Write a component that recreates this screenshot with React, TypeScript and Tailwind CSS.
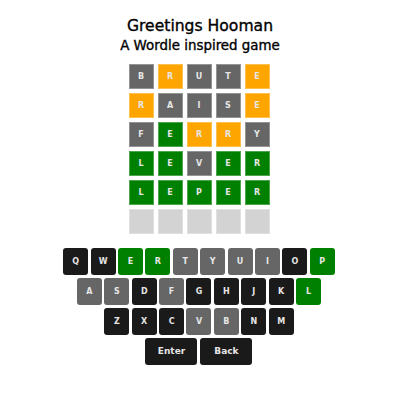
const GREEN = "bg-[#008000]";
const ORANGE = "bg-[#ffa500]";
const GRAY = "bg-[#666666]";
const DARK = "bg-[#1a1a1a]";

type Tile = { l: string; c: string };

const g = (l: string): Tile => ({ l, c: GRAY });
const o = (l: string): Tile => ({ l, c: ORANGE });
const v = (l: string): Tile => ({ l, c: GREEN });

const board: Tile[][] = [
  [g("B"), o("R"), g("U"), g("T"), o("E")],
  [o("R"), g("A"), g("I"), g("S"), o("E")],
  [g("F"), v("E"), o("R"), o("R"), g("Y")],
  [v("L"), v("E"), g("V"), v("E"), v("R")],
  [v("L"), v("E"), v("P"), v("E"), v("R")],
];

const keyColors: Record<string, string> = {
  Q: DARK, W: DARK, E: GREEN, R: GREEN, T: GRAY, Y: GRAY, U: GRAY, I: GRAY, O: DARK, P: GREEN,
  A: GRAY, S: GRAY, D: DARK, F: GRAY, G: DARK, H: DARK, J: DARK, K: DARK, L: GREEN,
  Z: DARK, X: DARK, C: DARK, V: GRAY, B: GRAY, N: DARK, M: DARK,
};

const rows = ["QWERTYUIOP", "ASDFGHJKL", "ZXCVBNM"];

function Key({ label, wide }: { label: string; wide?: boolean }) {
  return (
    <div
      className={`${keyColors[label] ?? DARK} ${wide ? "w-[52px] text-[9px]" : "w-[25px] text-[8px]"} h-[27px] rounded-[3px] flex items-center justify-center text-[#e6e6e6] font-bold`}
    >
      {label}
    </div>
  );
}

export default function App() {
  return (
    <div className="w-[400px] h-[400px] bg-white flex flex-col items-center pt-[17px] font-['DejaVu_Sans',sans-serif]">
      {/* title looks a touch heavier than DejaVu regular */}
      <h1 className="text-[15.6px] leading-[19px] text-black [-webkit-text-stroke:0.35px_black]">Greetings Hooman</h1>
      <h2 className="text-[13.4px] leading-[17px] text-black mt-[1px] [-webkit-text-stroke:0.35px_black]">A Wordle inspired game</h2>

      {/* Board */}
      <div className="flex flex-col gap-[4px] mt-[10px] ml-[-2px]">
        {board.map((row, i) => (
          <div key={i} className="flex gap-[4px]">
            {row.map((t, j) => (
              <div
                key={j}
                className={`${t.c} w-[25px] h-[25px] border border-white/30 flex items-center justify-center text-[#e6e6e6] text-[8px] font-bold`}
              >
                {t.l}
              </div>
            ))}
          </div>
        ))}
        <div className="flex gap-[4px]">
          {[0, 1, 2, 3, 4].map((j) => (
            <div key={j} className="bg-[#d3d3d3] w-[25px] h-[25px] border border-white/30" />
          ))}
        </div>
      </div>

      {/* Keyboard */}
      <div className="flex flex-col items-center gap-[3px] mt-[14px] ml-[-2px]">
        {rows.map((r) => (
          <div key={r} className="flex gap-[2.4px]">
            {r.split("").map((k) => (
              <Key key={k} label={k} />
            ))}
          </div>
        ))}
        <div className="flex gap-[3px]">
          <Key label="Enter" wide />
          <Key label="Back" wide />
        </div>
      </div>
    </div>
  );
}
